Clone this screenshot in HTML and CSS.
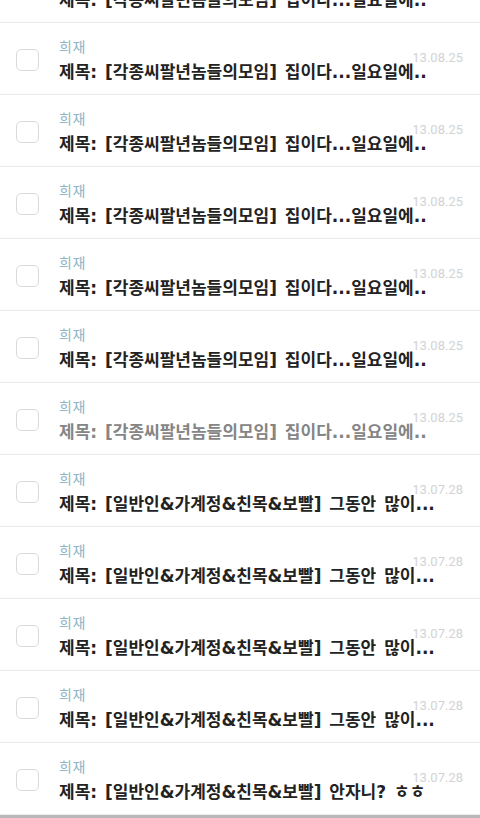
FILE: index.html
```html
<!DOCTYPE html>
<html lang="ko">
<head>
<meta charset="utf-8">
<title>쪽지함</title>
<link rel="stylesheet" href="styles.css">
</head>
<body>
<ul class="list">
  <li class="row">
    <span class="check"></span>
    <span class="name">희재</span>
    <span class="date">13.08.25</span>
    <span class="title">제목: [각종씨팔년놈들의모임] 집이다...일요일에..</span>
  </li>
  <li class="row">
    <span class="check"></span>
    <span class="name">희재</span>
    <span class="date">13.08.25</span>
    <span class="title">제목: [각종씨팔년놈들의모임] 집이다...일요일에..</span>
  </li>
  <li class="row">
    <span class="check"></span>
    <span class="name">희재</span>
    <span class="date">13.08.25</span>
    <span class="title">제목: [각종씨팔년놈들의모임] 집이다...일요일에..</span>
  </li>
  <li class="row">
    <span class="check"></span>
    <span class="name">희재</span>
    <span class="date">13.08.25</span>
    <span class="title">제목: [각종씨팔년놈들의모임] 집이다...일요일에..</span>
  </li>
  <li class="row">
    <span class="check"></span>
    <span class="name">희재</span>
    <span class="date">13.08.25</span>
    <span class="title">제목: [각종씨팔년놈들의모임] 집이다...일요일에..</span>
  </li>
  <li class="row">
    <span class="check"></span>
    <span class="name">희재</span>
    <span class="date">13.08.25</span>
    <span class="title">제목: [각종씨팔년놈들의모임] 집이다...일요일에..</span>
  </li>
  <li class="row read">
    <span class="check"></span>
    <span class="name">희재</span>
    <span class="date">13.08.25</span>
    <span class="title">제목: [각종씨팔년놈들의모임] 집이다...일요일에..</span>
  </li>
  <li class="row">
    <span class="check"></span>
    <span class="name">희재</span>
    <span class="date">13.07.28</span>
    <span class="title">제목: [일반인&amp;가계정&amp;친목&amp;보빨] 그동안 많이...</span>
  </li>
  <li class="row">
    <span class="check"></span>
    <span class="name">희재</span>
    <span class="date">13.07.28</span>
    <span class="title">제목: [일반인&amp;가계정&amp;친목&amp;보빨] 그동안 많이...</span>
  </li>
  <li class="row">
    <span class="check"></span>
    <span class="name">희재</span>
    <span class="date">13.07.28</span>
    <span class="title">제목: [일반인&amp;가계정&amp;친목&amp;보빨] 그동안 많이...</span>
  </li>
  <li class="row">
    <span class="check"></span>
    <span class="name">희재</span>
    <span class="date">13.07.28</span>
    <span class="title">제목: [일반인&amp;가계정&amp;친목&amp;보빨] 그동안 많이...</span>
  </li>
  <li class="row">
    <span class="check"></span>
    <span class="name">희재</span>
    <span class="date">13.07.28</span>
    <span class="title">제목: [일반인&amp;가계정&amp;친목&amp;보빨] 안자니? ㅎㅎ</span>
  </li>
</ul>
<div class="footer"></div>
</body>
</html>
```

FILE: styles.css
```css
html, body {
  margin: 0;
  padding: 0;
  background: #ffffff;
  overflow: hidden;
}

.list {
  list-style: none;
  margin: -49px 0 0 0;
  padding: 0;
}

.row {
  box-sizing: border-box;
  height: 72px;
  display: grid;
  grid-template-columns: 43px 1fr 50px;
  grid-template-rows: 20px 4px 24px;
  padding: 13px 17px 10px 16px;
  border-bottom: 1px solid #ebebeb;
}

.check {
  grid-column: 1;
  grid-row: 1 / 4;
  align-self: start;
  box-sizing: border-box;
  width: 23px;
  height: 22px;
  margin-top: 13px;
  border: 1.5px solid #d9d9d9;
  border-radius: 5px;
  background: #fff;
}

.name {
  grid-column: 2;
  grid-row: 1;
  font-family: "Noto Sans CJK KR", sans-serif;
  font-size: 14px;
  letter-spacing: 0.5px;
  line-height: 20px;
  color: #8db3c7;
}

.date {
  grid-column: 3;
  grid-row: 1 / 4;
  align-self: start;
  justify-self: end;
  margin-top: 15px;
  font-family: Roboto, sans-serif;
  font-size: 13px;
  line-height: 14px;
  color: #d3d3d3;
  white-space: nowrap;
}

.title {
  grid-column: 2 / 4;
  grid-row: 3;
  font-family: "DejaVu Sans", "Noto Sans CJK KR", sans-serif;
  font-weight: 700;
  font-size: 17px;
  letter-spacing: 0;
  word-spacing: 2px;
  line-height: 24px;
  color: #222222;
  white-space: nowrap;
}

.read .title {
  color: #858585;
}

.footer {
  height: 4px;
  background: #b8b8b8;
}
```
